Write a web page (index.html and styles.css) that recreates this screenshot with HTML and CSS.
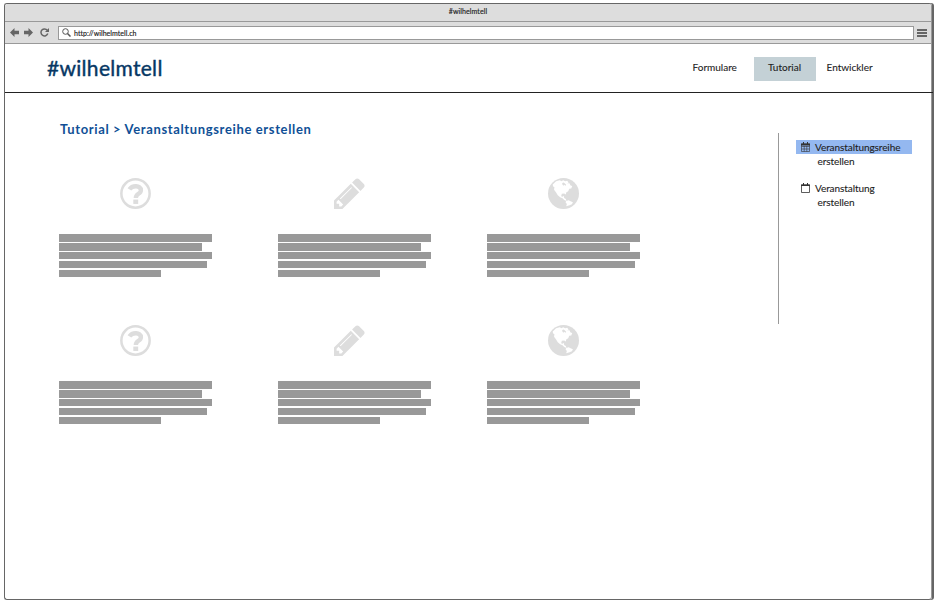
FILE: index.html
```html
<!DOCTYPE html>
<html lang="de">
<head>
<meta charset="utf-8">
<title>#wilhelmtell</title>
<link rel="stylesheet" href="styles.css">
</head>
<body>
<svg class="symbols" aria-hidden="true">
  <symbol id="question" viewBox="0 0 92 92">
    <circle cx="46" cy="46" r="42" fill="none" stroke="currentColor" stroke-width="7.5"/>
    <path d="M28 34C36 21 62 21 62 36C62 48 47 46 47 59" fill="none" stroke="currentColor" stroke-width="13"/>
    <path d="M39.500 64h14.500v13h-14.500z" fill="currentColor"/>
  </symbol>
  <symbol id="pencil" viewBox="128 128 1536 1536">
    <path fill="currentColor" d="M491 1536l91-91-235-235-91 91v107h128v128h107zm523-928q0-22-22-22-10 0-17 7l-542 542q-7 7-7 17 0 22 22 22 10 0 17-7l542-542q7-7 7-17zm-54-192l416 416-832 832h-416v-416zm683 96q0 53-37 90l-166 166-416-416 166-165q36-38 90-38 53 0 91 38l235 234q37 39 37 91z"/>
  </symbol>
  <symbol id="globe" viewBox="203 26 92 92">
    <circle cx="249" cy="72" r="46" fill="currentColor"/>
    <path fill="#fff" d="M217 45L227 36L238 33L243 36L248 33L254 36L260 34L264 39L260 43L266 41L270 48L275 50L272 57L266 58L263 65L257 69L256 75L251 72L244 73L242 80L247 82L250 79L251 85L256 88L258 94L251 91L246 86L239 83L232 77L227 69L221 61L222 53L218 51Z"/>
    <path fill="#fff" d="M257 94L264 92L270 95L277 98L274 104L267 107L257 110L259 103L255 98Z"/>
    <path fill="currentColor" d="M245 41L250 39L254 43L257 46L255 49L251 46L249 49L246 46Z"/>
  </symbol>
</svg>
<div class="window">
  <div class="titlebar">#wilhelmtell</div>
  <div class="toolbar">
    <svg class="arrow" viewBox="0 0 9 9"><path d="M0 4.500L4.500 0V2.700H9V6.300H4.500V9Z"/></svg>
    <svg class="arrow forward" viewBox="0 0 9 9"><path d="M9 4.500L4.500 0V2.700H0V6.300H4.500V9Z"/></svg>
    <svg class="reload" viewBox="0 0 9 9"><path d="M7.300 2.300A3.500 3.500 0 1 0 7.800 5.600" fill="none" stroke="#666" stroke-width="1.500"/><path d="M9 0V4H5Z"/></svg>
    <div class="address">
      <svg viewBox="0 0 9 9"><circle cx="3.500" cy="3.500" r="2.800" fill="none" stroke="#555"/><path d="M5.500 5.500L8.500 8.500" stroke="#555" stroke-width="1.500"/></svg>
      <span class="url">http://wilhelmtell.ch</span>
    </div>
    <div class="menu"><i></i><i></i><i></i></div>
  </div>
  <header class="header">
    <div class="logo">#wilhelmtell</div>
    <nav class="nav">
      <a class="formulare"><span>Formulare</span></a>
      <a class="active"><span>Tutorial</span></a>
      <a class="entwickler"><span>Entwickler</span></a>
    </nav>
  </header>
  <div class="content">
    <main class="main">
      <h1><span>Tutorial &gt; Veranstaltungsreihe erstellen</span></h1>
      <div class="cards">
        <section class="card"><svg><use href="#question"/></svg><div class="lines"><i></i><i></i><i></i><i></i><i></i></div></section>
        <section class="card pencil"><svg><use href="#pencil"/></svg><div class="lines"><i></i><i></i><i></i><i></i><i></i></div></section>
        <section class="card"><svg><use href="#globe"/></svg><div class="lines"><i></i><i></i><i></i><i></i><i></i></div></section>
        <section class="card"><svg><use href="#question"/></svg><div class="lines"><i></i><i></i><i></i><i></i><i></i></div></section>
        <section class="card pencil"><svg><use href="#pencil"/></svg><div class="lines"><i></i><i></i><i></i><i></i><i></i></div></section>
        <section class="card"><svg><use href="#globe"/></svg><div class="lines"><i></i><i></i><i></i><i></i><i></i></div></section>
      </div>
    </main>
    <aside class="sidebar">
      <div class="item selected">
        <svg viewBox="0 0 9 10"><path d="M.5 2H8.500V9.500H.5ZM.5 4.500H8.500M.5 7H8.500M3.200 4V9.500M5.800 4V9.500" fill="none" stroke="#333" stroke-width=".6"/><path d="M0 1.500H9V3.500H0ZM2 0H3V2H2ZM6 0H7V2H6Z" fill="#333"/></svg>
        <span class="long">Veranstaltungsreihe</span>
      </div>
      <div class="sub">erstellen</div>
      <div class="item second">
        <svg viewBox="0 0 9 10"><path d="M.5 2H8.500V9.500H.5Z" fill="none" stroke="#333" stroke-width=".8"/><path d="M0 1.500H9V3H0ZM2 0H3V2H2ZM6 0H7V2H6Z" fill="#333"/></svg>
        <span class="short">Veranstaltung</span>
      </div>
      <div class="sub">erstellen</div>
    </aside>
  </div>
</div>
</body>
</html>
```
FILE: styles.css
```css
* { box-sizing: border-box; }
body { margin: 0; padding: 3px 4px; height: 603px; overflow: hidden; background: #fff; color: #222; font-family: Lato, "Liberation Sans", sans-serif; }
svg { display: block; flex: none; }
.symbols { display: none; }
.window { width: 928px; height: 597px; border: 1px solid #666; border-right-color: #999; border-radius: 3px; box-shadow: 2px 0 0 #666; }
.titlebar { height: 18px; padding-top: 1px; border-bottom: 1px solid #999; background: #ddd; font-size: 7px; line-height: 13px; text-align: center; letter-spacing: .1px; -webkit-text-stroke: .15px; border-radius: 2px 2px 0 0; }
.toolbar { display: flex; align-items: center; height: 22px; padding-left: 5px; border-bottom: 1px solid #999; background: #ddd; }
.toolbar > svg { fill: #666; }
.arrow { width: 9px; height: 9px; }
.forward { margin-left: 5px; }
.reload { width: 9px; height: 9px; margin-left: 7px; }
.address { display: flex; align-items: center; width: 856px; height: 14px; margin-left: 9px; padding-left: 3px; border: 1px solid #999; background: #fff; }
.address svg { width: 9px; height: 9px; margin-right: 3px; }
.url { font-size: 7px; line-height: 12px; letter-spacing: .05px; -webkit-text-stroke: .15px; }
.menu { display: flex; flex-direction: column; gap: 1px; margin-left: 3px; width: 10px; }
.menu i { height: 2px; background: #666; }
.header { display: flex; align-items: flex-start; justify-content: space-between; width: 928px; height: 49px; padding: 0 0 0 42px; border-bottom: 1px solid #222; }
.logo { padding-top: 11px; color: #063764; font-size: 21px; line-height: 25px; letter-spacing: .3px; -webkit-text-stroke: .4px; }
.nav { display: flex; margin-top: 13px; padding-right: 59.500px; font-size: 10px; line-height: 21px; -webkit-text-stroke: .1px; }
.formulare { width: 61px; }
.active { width: 62px; height: 24px; background: #c4d1d6; text-align: center; }
.entwickler { width: 47px; margin-left: 11px; }
.content { display: flex; }
.main { width: 773px; padding: 28px 0 0 54px; }
h1 { margin: 0; padding-left: 1px; color: #105096; font-size: 13px; line-height: 16px; height: 18px; font-weight: bold; letter-spacing: .64px; white-space: nowrap; }
.cards { display: grid; grid-template-columns: 219px 209px 153px; grid-template-rows: 147px 147px; margin-top: 39.400px; }
.card svg { width: 31px; height: 31px; margin-left: 60.500px; color: #ddd; }
.card.pencil svg { margin-left: 55.500px; }
.card:nth-child(3n) svg { margin-left: 60.500px; }
.lines { width: 152.600px; margin-top: 25px; }
.lines i { display: block; height: 7.400px; margin-bottom: 1.400px; background: #999; }
.lines i:nth-child(2) { width: 142.600px; }
.lines i:nth-child(4) { width: 147.600px; }
.lines i:nth-child(5) { width: 101.800px; }
.sidebar { width: 134px; height: 191px; margin-top: 40px; padding: 7px 0 0 17px; border-left: 1px solid #999; font-size: 10px; line-height: 14px; letter-spacing: -.08px; -webkit-text-stroke: .1px; }
.item { display: flex; align-items: center; width: 116px; height: 14px; padding-left: 5px; }
.item svg { width: 9px; height: 10px; margin-right: 5px; }
.selected { background: #94b8f0; }
.sub { padding-left: 21.500px; }
.second { margin-top: 13.400px; }
```
